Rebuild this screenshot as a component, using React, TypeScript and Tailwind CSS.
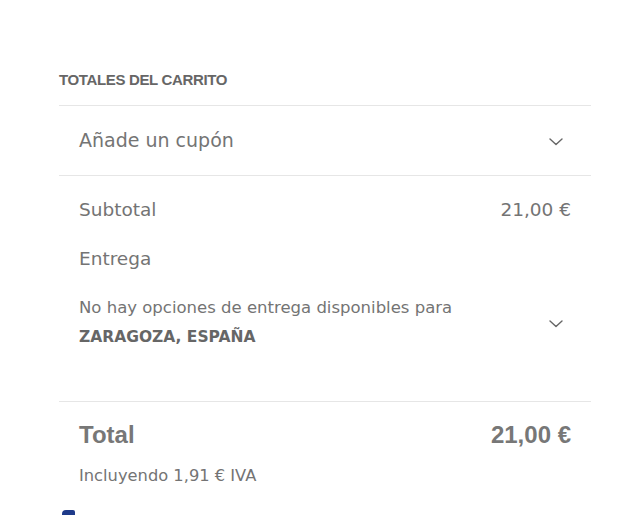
function Chevron() {
  return (
    <svg width="14" height="8" viewBox="0 0 14 8" fill="none" className="text-[#666]">
      <polyline points="1,1 7,6.5 13,1" stroke="currentColor" strokeWidth="1.4" strokeLinecap="round" strokeLinejoin="round" />
    </svg>
  )
}

export default function App() {
  return (
    <div className="min-h-[515px] bg-white font-['DejaVu_Sans',sans-serif] text-[#747474]">
      <div className="pl-[59px] pr-[46px] pt-[70px]">
        <h2 className="font-['Liberation_Sans',sans-serif] text-[15px] font-bold uppercase tracking-[-0.35px] text-[#666] leading-[20px] pb-[15px] border-b border-[#e6e6e6]">
          Totales del carrito
        </h2>

        <div className="flex items-center justify-between pl-[20px] pr-[28px] h-[70px] border-b border-[#e6e6e6]">
          <span className="text-[19px]">Añade un cupón</span>
          <span className="mt-[3px]">
            <Chevron />
          </span>
        </div>

        <div className="px-[20px] pt-[22px] pb-[49px] border-b border-[#e6e6e6]">
          <div className="flex items-center justify-between text-[18.5px] leading-[24px]">
            <span>Subtotal</span>
            <span>21,00 €</span>
          </div>
          <div className="mt-[25px] text-[18.5px] leading-[24px]">Entrega</div>
          <div className="mt-[22px] flex items-center justify-between pr-[8px]">
            <p className="text-[16.5px] leading-[29px]">
              No hay opciones de entrega disponibles para
              <br />
              <strong className="font-bold text-[15.5px] text-[#666]">ZARAGOZA, ESPAÑA</strong>
            </p>
            <span className="mt-[3px]">
              <Chevron />
            </span>
          </div>
        </div>

        <div className="px-[20px] pt-[16px]">
          <div className="flex items-center justify-between font-['Liberation_Sans',sans-serif] text-[24px] font-bold text-[#777] leading-[34px]">
            <span>Total</span>
            <span>21,00 €</span>
          </div>
          <div className="mt-[12px] text-[16.3px] leading-[24px]">Incluyendo 1,91 € IVA</div>
        </div>
        <div className="mt-[22px] ml-[3px] h-[6px] w-[13px] rounded-tl-[4px] rounded-tr-[2px] bg-[#1e3a8a]" />
      </div>
    </div>
  )
}
